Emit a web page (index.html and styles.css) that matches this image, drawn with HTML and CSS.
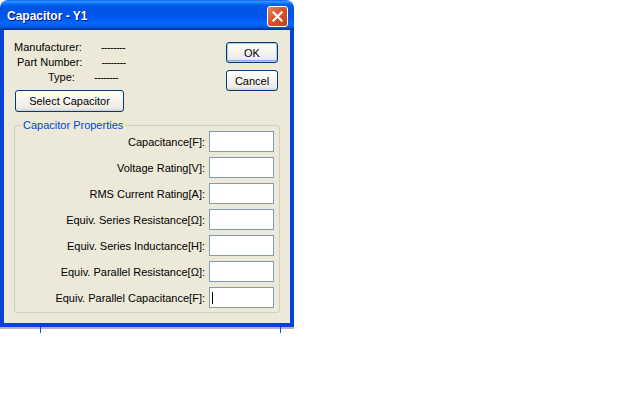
FILE: index.html
```html
<!DOCTYPE html>
<html lang="en">
<head>
  <meta charset="UTF-8">
  <title>Capacitor - Y1</title>
  <link rel="stylesheet" href="styles.css">
</head>
<body>
  <div class="window">
    <div class="titlebar">
      <span class="title">Capacitor - Y1</span>
      <span class="close">
        <svg width="11" height="11" viewBox="0 0 11 11"><path d="M1.5 1.5 L9.5 9.5 M9.5 1.5 L1.5 9.5" stroke="#fff" stroke-width="2.2" stroke-linecap="square"/></svg>
      </span>
    </div>
    <div class="frame">
      <div class="top">
        <div class="info">
          <div class="line mfr"><span>Manufacturer:</span><span class="dash">--------</span></div>
          <div class="line part"><span>Part Number:</span><span class="dash">--------</span></div>
          <div class="line type"><span>Type:</span><span class="dash">--------</span></div>
          <button class="btn select">Select Capacitor</button>
        </div>
        <div class="actions">
          <button class="btn default">OK</button>
          <button class="btn">Cancel</button>
        </div>
      </div>

      <fieldset class="props">
        <legend>Capacitor Properties</legend>
        <div class="row"><label>Capacitance[F]:</label><div class="field"></div></div>
        <div class="row"><label>Voltage Rating[V]:</label><div class="field"></div></div>
        <div class="row"><label>RMS Current Rating[A]:</label><div class="field"></div></div>
        <div class="row"><label>Equiv. Series Resistance[Ω]:</label><div class="field"></div></div>
        <div class="row"><label>Equiv. Series Inductance[H]:</label><div class="field"></div></div>
        <div class="row"><label>Equiv. Parallel Resistance[Ω]:</label><div class="field"></div></div>
        <div class="row"><label>Equiv. Parallel Capacitance[F]:</label><div class="field"><span class="caret"></span></div></div>
      </fieldset>
    </div>
  </div>
  <div class="under"><span class="tick"></span><span class="tick right"></span></div>
</body>
</html>
```

FILE: styles.css
```css
body { margin: 0; background: #fff; font-family: "Liberation Sans", Arial, sans-serif; font-size: 11px; }

.window { width: 294px; }

.titlebar {
  height: 30px;
  box-sizing: border-box;
  display: flex;
  justify-content: space-between;
  align-items: flex-start;
  padding: 0 6px 0 7px;
  border-radius: 8px 8px 0 0;
  background: linear-gradient(to bottom, #0058ee 0%, #3593ff 4%, #288eff 7%, #127dff 10%, #036ffc 13%, #0262ee 17%, #0057e5 22%, #0054e3 28%, #0055eb 56%, #005bf5 66%, #026afe 76%, #0062ef 86%, #0052d6 92%, #0040ab 96%, #003092 100%);
}
.title {
  margin-top: 9px;
  color: #fff;
  font-weight: bold;
  font-size: 12px;
  text-shadow: 1px 1px #0a1883;
}
.close {
  margin-top: 6px;
  width: 21px;
  height: 21px;
  box-sizing: border-box;
  border: 1px solid #fff;
  border-radius: 3px;
  background: linear-gradient(135deg, #e8865f 0%, #d9542c 45%, #c2401b 100%);
  display: flex;
  align-items: center;
  justify-content: center;
}

.frame {
  background: #ece9d8;
  border: 4px solid #0843d9;
  border-top: none;
  padding-bottom: 10px;
}

.top {
  display: flex;
  justify-content: space-between;
  padding: 10px 12px 0 10px;
}
.line { display: flex; gap: 19px; line-height: 15px; }
.line.part { padding-left: 3px; }
.line.type { padding-left: 34px; }
.dash { letter-spacing: -0.66px; }

.btn {
  font-family: "Liberation Sans", Arial, sans-serif;
  font-size: 11px;
  color: #000;
  height: 21px;
  padding: 0;
  border: 1px solid #003c74;
  border-radius: 3px;
  background: linear-gradient(to bottom, #fff 0%, #f6f5f0 40%, #ecebe6 85%, #d6d0c5 100%);
}
.select { margin: 5px 0 0 1px; width: 109px; height: 22px; }
.actions { display: flex; flex-direction: column; gap: 7px; margin-top: 2px; }
.actions .btn { width: 52px; }
.default { box-shadow: inset 0 0 0 1px #b3cbf2, inset 0 -1px 0 1px #89adec; }

.props {
  margin: 8px 10px 0;
  padding: 0 5px 4px 0;
  border: 1px solid #d0d0bf;
  border-radius: 3px;
  display: flex;
  flex-direction: column;
  gap: 5px;
}
.props legend {
  margin-left: 6px;
  padding: 0 2px;
  line-height: 11px;
  color: #0046d5;
}
.row { display: flex; justify-content: flex-end; align-items: center; gap: 4px; }
.field {
  width: 65px;
  height: 21px;
  box-sizing: border-box;
  border: 1px solid #7f9db9;
  background: #fff;
  padding-left: 2px;
  display: flex;
  align-items: center;
}
.caret { width: 1px; height: 12px; background: #000; }

.under {
  width: 294px;
  height: 6px;
  display: flex;
  background: linear-gradient(to bottom, #b4b4b4 0, #b4b4b4 2px, transparent 2px);
}
.tick { width: 1px; height: 6px; background: #1e3cf0; margin-left: 40px; }
.tick.right { margin-left: auto; margin-right: 13px; }
```
